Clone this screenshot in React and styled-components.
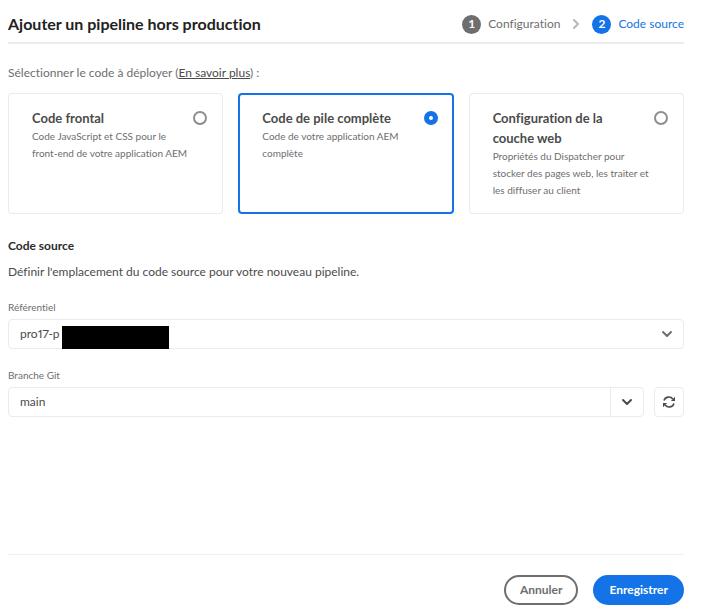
import React, { useState } from "react";
import styled, { createGlobalStyle } from "styled-components";

const BLUE = "#1473e6";
const BORDER = "#ebebeb";

const GlobalStyle = createGlobalStyle`
  *, *::before, *::after { box-sizing: border-box; }
  body {
    margin: 0;
    background: #fff;
    color: #4b4b4b;
    font-family: Lato, "Noto Sans", sans-serif;
    font-size: 12px;
    line-height: 20px;
    font-variant-ligatures: none;
  }
  button, input, select { font: inherit; color: inherit; }
  h1, h2, p, ol { margin: 0; padding: 0; }
`;

const Dialog = styled.form`
  display: flex;
  flex-direction: column;
  min-height: 100vh;
  padding: 6px 22px 9px 8px;
`;

const Header = styled.header`
  display: flex;
  align-items: center;
  justify-content: space-between;
  height: 38px;
  border-bottom: 2px solid ${BORDER};
`;

const Title = styled.h1`
  font-size: 16px;
  font-weight: 700;
  color: #222;
`;

const Steps = styled.ol`
  display: flex;
  align-items: center;
  list-style: none;
`;

const Step = styled.li`
  display: flex;
  align-items: center;
  gap: 7px;
  color: ${(p) => (p.$active ? BLUE : "#6e6e6e")};
`;

const StepNumber = styled.span`
  width: 19px;
  height: 19px;
  border-radius: 50%;
  background: ${(p) => (p.$active ? BLUE : "#6e6e6e")};
  color: #fff;
  font-weight: 700;
  line-height: 18px;
  text-align: center;
`;

const StepArrow = styled.li`
  display: flex;
  margin: 0 12px;
  color: #b8b8b8;
`;

const Intro = styled.p`
  margin-top: 19px;
  color: #6e6e6e;
`;

const IntroLink = styled.a`
  color: #4b4b4b;
  text-decoration: underline;
`;

const Cards = styled.div`
  display: grid;
  grid-template-columns: repeat(3, 1fr);
  gap: 15px;
  margin-top: 10px;
`;

const Card = styled.label`
  display: flex;
  align-items: flex-start;
  gap: 8px;
  min-height: 121px;
  padding: 15px 16px 15px 24px;
  border-radius: 4px;
  box-shadow: inset 0 0 0 ${(p) => (p.$selected ? `2px ${BLUE}` : `1px ${BORDER}`)};
  cursor: pointer;
`;

const CardText = styled.span`
  flex: 1;
  min-width: 0;
`;

const CardTitle = styled.span`
  display: block;
  max-width: 144px;
  font-size: 13px;
  font-weight: 700;
`;

const CardDescription = styled.span`
  display: block;
  margin-right: -6px;
  font-size: 10px;
  line-height: 17px;
  color: #6e6e6e;
`;

const Radio = styled.input`
  appearance: none;
  flex: none;
  width: 14px;
  height: 14px;
  margin: 3px 0 0;
  border: 2px solid #8e8e8e;
  border-radius: 50%;
  background: #fff;

  &:checked { border: 5px solid ${BLUE}; }
`;

const SectionTitle = styled.h2`
  margin-top: 22px;
  font-size: 12px;
  font-weight: 700;
  color: #2c2c2c;
`;

const SectionText = styled.p`
  margin-top: 6px;
`;

const Field = styled.div`
  margin-top: ${(p) => p.$top}px;
`;

const FieldLabel = styled.label`
  display: block;
  margin-bottom: 4px;
  font-size: 10px;
  line-height: 16px;
  color: #6e6e6e;
`;

const SelectBox = styled.div`
  position: relative;
  display: flex;
  align-items: center;
`;

const Select = styled.select`
  appearance: none;
  width: 100%;
  height: 30px;
  padding: 0 32px 0 11px;
  border: 1px solid ${BORDER};
  border-radius: 4px;
  background: #fff;
  font-variant-numeric: proportional-nums;
`;

const SelectIcon = styled.span`
  position: absolute;
  right: 11px;
  display: flex;
  color: #6e6e6e;
  pointer-events: none;
`;

const Redaction = styled.span`
  position: absolute;
  left: 54px;
  bottom: 0;
  width: 107px;
  height: 23px;
  background: #000;
`;

const BranchRow = styled.div`
  display: flex;
  gap: 10px;
`;

const Combo = styled.div`
  display: flex;
  flex: 1;
  height: 30px;
  border: 1px solid ${BORDER};
  border-radius: 4px;
`;

const ComboInput = styled.input`
  flex: 1;
  min-width: 0;
  padding: 0 11px;
  border: 0;
  border-radius: 4px;
  background: none;
`;

const ComboButton = styled.button`
  display: grid;
  place-items: center;
  width: 33px;
  padding: 0;
  border: 0;
  border-left: 1px solid ${BORDER};
  background: none;
`;

const IconButton = styled.button`
  display: grid;
  place-items: center;
  width: 30px;
  height: 30px;
  padding: 0;
  border: 1px solid ${BORDER};
  border-radius: 4px;
  background: #fff;
`;

const Footer = styled.footer`
  display: flex;
  justify-content: flex-end;
  gap: 15px;
  margin-top: auto;
  padding-top: 20px;
  border-top: 1px solid #f0f0f0;
`;

const Button = styled.button`
  height: 30px;
  padding: 0 14px;
  border: 2px solid ${(p) => (p.$primary ? BLUE : "#6e6e6e")};
  border-radius: 15px;
  background: ${(p) => (p.$primary ? BLUE : "#fff")};
  color: ${(p) => (p.$primary ? "#fff" : "#6e6e6e")};
  font-size: 12px;
  font-weight: 700;
`;

const ChevronDown = () => (
  <svg width="12" height="12" viewBox="0 0 12 12" fill="none" aria-hidden="true">
    <path d="M2 4l4 4 4-4" stroke="currentColor" strokeWidth="2" strokeLinecap="round" strokeLinejoin="round" />
  </svg>
);

const ChevronRight = () => (
  <svg width="8" height="12" viewBox="0 0 8 12" fill="none" aria-hidden="true">
    <path d="M2 2l4 4-4 4" stroke="currentColor" strokeWidth="2" strokeLinecap="round" strokeLinejoin="round" />
  </svg>
);

const RefreshIcon = () => (
  <svg width="14" height="14" viewBox="0 0 14 14" fill="none" aria-hidden="true">
    <path d="M2 5.6A5.1 5.1 0 0 1 10.8 3.9M12 8.4a5.1 5.1 0 0 1-8.8 1.7" stroke="#4b4b4b" strokeWidth="1.6" />
    <path d="M13 1.8v4.1H8.9zM1 12.2V8.1h4.1z" fill="#4b4b4b" />
  </svg>
);

const OPTIONS = [
  { id: "front", title: "Code frontal", text: "Code JavaScript et CSS pour le front-end de votre application AEM" },
  { id: "full", title: "Code de pile complète", text: "Code de votre application AEM complète" },
  {
    id: "web",
    title: "Configuration de la couche web",
    text: "Propriétés du Dispatcher pour stocker des pages web, les traiter et les diffuser au client",
  },
];

export default function App() {
  const [selected, setSelected] = useState("full");
  const [branch, setBranch] = useState("main");

  return (
    <>
      <GlobalStyle />
      <Dialog onSubmit={(e) => e.preventDefault()}>
        <Header>
          <Title>Ajouter un pipeline hors production</Title>
          <Steps>
            <Step>
              <StepNumber>1</StepNumber>
              Configuration
            </Step>
            <StepArrow aria-hidden="true">
              <ChevronRight />
            </StepArrow>
            <Step $active aria-current="step">
              <StepNumber $active>2</StepNumber>
              Code source
            </Step>
          </Steps>
        </Header>

        <Intro>
          Sélectionner le code à déployer (<IntroLink href="#">En savoir plus</IntroLink>) :
        </Intro>

        <Cards role="radiogroup" aria-label="Code à déployer">
          {OPTIONS.map((o) => (
            <Card key={o.id} htmlFor={o.id} $selected={selected === o.id}>
              <CardText>
                <CardTitle>{o.title}</CardTitle>
                <CardDescription>{o.text}</CardDescription>
              </CardText>
              <Radio
                type="radio"
                name="code"
                id={o.id}
                checked={selected === o.id}
                onChange={() => setSelected(o.id)}
              />
            </Card>
          ))}
        </Cards>

        <SectionTitle>Code source</SectionTitle>
        <SectionText>Définir l'emplacement du code source pour votre nouveau pipeline.</SectionText>

        <Field $top={17}>
          <FieldLabel htmlFor="repository">Référentiel</FieldLabel>
          <SelectBox>
            <Select id="repository">
              <option>pro17-p</option>
            </Select>
            <Redaction />
            <SelectIcon>
              <ChevronDown />
            </SelectIcon>
          </SelectBox>
        </Field>

        <Field $top={18}>
          <FieldLabel htmlFor="branch">Branche Git</FieldLabel>
          <BranchRow>
            <Combo>
              <ComboInput id="branch" type="text" value={branch} onChange={(e) => setBranch(e.target.value)} />
              <ComboButton type="button" aria-label="Afficher les branches">
                <ChevronDown />
              </ComboButton>
            </Combo>
            <IconButton type="button" aria-label="Actualiser">
              <RefreshIcon />
            </IconButton>
          </BranchRow>
        </Field>

        <Footer>
          <Button type="button">Annuler</Button>
          <Button type="submit" $primary>
            Enregistrer
          </Button>
        </Footer>
      </Dialog>
    </>
  );
}
